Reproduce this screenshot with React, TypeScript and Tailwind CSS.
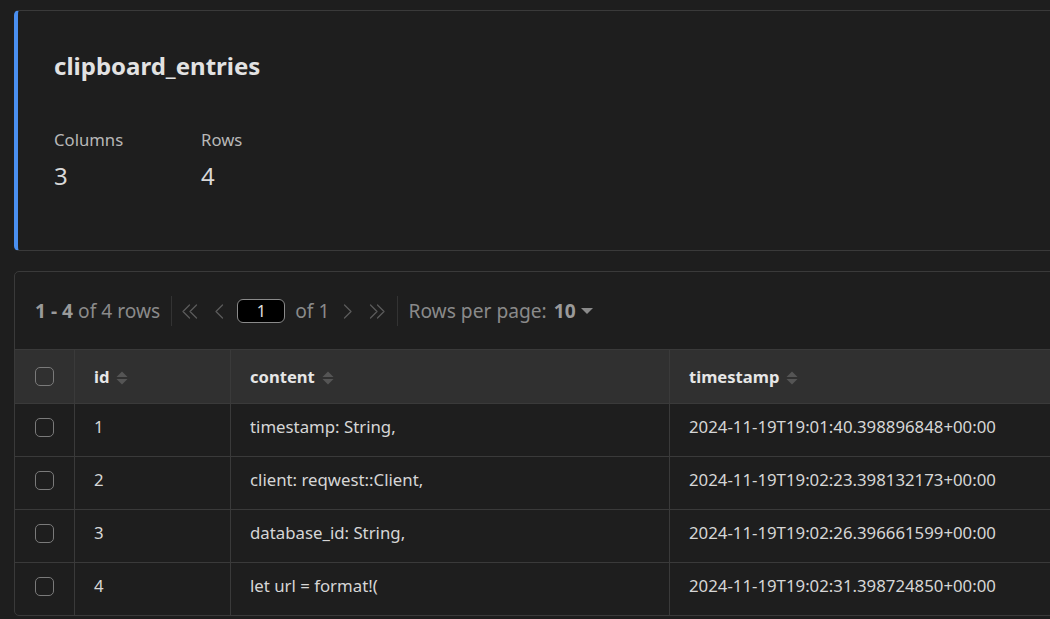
import React from "react";

const rows = [
  { id: 1, content: "timestamp: String,", ts: "2024-11-19T19:01:40.398896848+00:00" },
  { id: 2, content: "client: reqwest::Client,", ts: "2024-11-19T19:02:23.398132173+00:00" },
  { id: 3, content: "database_id: String,", ts: "2024-11-19T19:02:26.396661599+00:00" },
  { id: 4, content: "let url = format!(", ts: "2024-11-19T19:02:31.398724850+00:00" },
];

function SortIcon() {
  return (
    <svg width="12" height="16" viewBox="0 0 12 16" className="ml-[7px]">
      <path d="M6 1.5 L11.5 7 L0.5 7 Z" fill="#555555" />
      <path d="M6 14.5 L11.5 9 L0.5 9 Z" fill="#555555" />
    </svg>
  );
}

function Checkbox() {
  return <div className="w-[19px] h-[19px] rounded-[5px] border border-[#7a7a7a]" />;
}

export default function App() {
  const stroke = {
    fill: "none",
    stroke: "#5a5a5a",
    strokeWidth: 1.3,
    strokeLinecap: "round" as const,
    strokeLinejoin: "round" as const,
  };
  return (
    <div
      className="w-[1050px] h-[619px] overflow-hidden bg-[#1e1e1e] text-[#d4d4d4]"
      style={{ fontFamily: '"Noto Sans", "Open Sans", sans-serif' }}
    >
      <div className="w-[1100px] pl-[14px] pt-[10px] flex flex-col gap-[20px]">
        {/* Summary card */}
        <div className="h-[241px] rounded-[5px] border border-[#3a3a3a] border-l-[4px] border-l-[#4a8ff0] bg-[#1e1e1e] pl-[36px] pt-[38px]">
          <div className="text-[24px] font-bold text-[#e2e2e2] leading-[34px]">clipboard_entries</div>
          <div className="flex mt-[46px]">
            <div className="w-[147px]">
              <div className="text-[16.7px] text-[#b8b8b8] leading-[22px]">Columns</div>
              <div className="text-[24px] text-[#d8d8d8] leading-[30px] mt-[10px]">3</div>
            </div>
            <div>
              <div className="text-[16.7px] text-[#b8b8b8] leading-[22px]">Rows</div>
              <div className="text-[24px] text-[#d8d8d8] leading-[30px] mt-[10px]">4</div>
            </div>
          </div>
        </div>

        {/* Table card */}
        <div className="rounded-[5px] border border-[#3a3a3a] bg-[#1e1e1e]">
          <div className="h-[77px] flex items-center pl-[20px] pt-[1px] text-[19.2px] text-[#8a8a8a]">
            <span>
              <span className="font-bold text-[#9a9a9a]">1 - 4</span> of 4 rows
            </span>
            <div className="w-px h-[30px] bg-[#333333] ml-[11px]" />
            <svg width="16" height="15" viewBox="0 0 16 15" className="ml-[10px]" {...stroke}>
              <path d="M7.5 1 L1 7.5 L7.5 14 M14.5 1 L8 7.5 L14.5 14" />
            </svg>
            <svg width="10" height="15" viewBox="0 0 10 15" className="ml-[16px]" {...stroke}>
              <path d="M8.5 1 L2 7.5 L8.5 14" />
            </svg>
            <div className="ml-[13px] w-[48px] h-[24px] rounded-[6px] border border-[#8a8a8a] bg-black flex items-center justify-center text-[16px] text-[#e0e0e0]">
              1
            </div>
            <span className="ml-[10px]">of 1</span>
            <svg width="10" height="15" viewBox="0 0 10 15" className="ml-[14px]" {...stroke}>
              <path d="M1.5 1 L8 7.5 L1.5 14" />
            </svg>
            <svg width="16" height="15" viewBox="0 0 16 15" className="ml-[16px]" {...stroke}>
              <path d="M1.5 1 L8 7.5 L1.5 14 M8.5 1 L15 7.5 L8.5 14" />
            </svg>
            <div className="w-px h-[30px] bg-[#333333] ml-[12px]" />
            <span className="ml-[10px]">Rows per page:</span>
            <span className="font-bold text-[#9a9a9a] ml-[7px]">10</span>
            <svg width="12" height="8" viewBox="0 0 12 8" className="ml-[5px]">
              <path d="M0 1 L12 1 L6 7 Z" fill="#8a8a8a" />
            </svg>
          </div>

          <div className="flex h-[54px] bg-[#303030] border-t border-[#3a3a3a] text-[16.6px] font-bold text-[#e6e6e6]">
            <div className="w-[60px] flex items-center justify-center border-r border-[#3a3a3a]">
              <Checkbox />
            </div>
            <div className="w-[156px] flex items-center pl-[19px] pt-[2px] border-r border-[#3a3a3a]">
              id
              <SortIcon />
            </div>
            <div className="w-[439px] flex items-center pl-[19px] pt-[2px] border-r border-[#3a3a3a]">
              content
              <SortIcon />
            </div>
            <div className="flex-1 flex items-center pl-[19px] pt-[2px]">
              timestamp
              <SortIcon />
            </div>
          </div>

          {rows.map((r) => (
            <div key={r.id} className="flex h-[53px] border-t border-[#3a3a3a] text-[16.8px] text-[#d6d6d6]">
              <div className="w-[60px] flex items-center justify-center pb-[5px] border-r border-[#3a3a3a]">
                <Checkbox />
              </div>
              <div className="w-[156px] flex items-center pl-[19px] pb-[7px] border-r border-[#3a3a3a]">{r.id}</div>
              <div className="w-[439px] flex items-center pl-[19px] pb-[7px] border-r border-[#3a3a3a]">{r.content}</div>
              <div className="flex-1 flex items-center pl-[19px] pb-[7px]">{r.ts}</div>
            </div>
          ))}
        </div>
      </div>
    </div>
  );
}
